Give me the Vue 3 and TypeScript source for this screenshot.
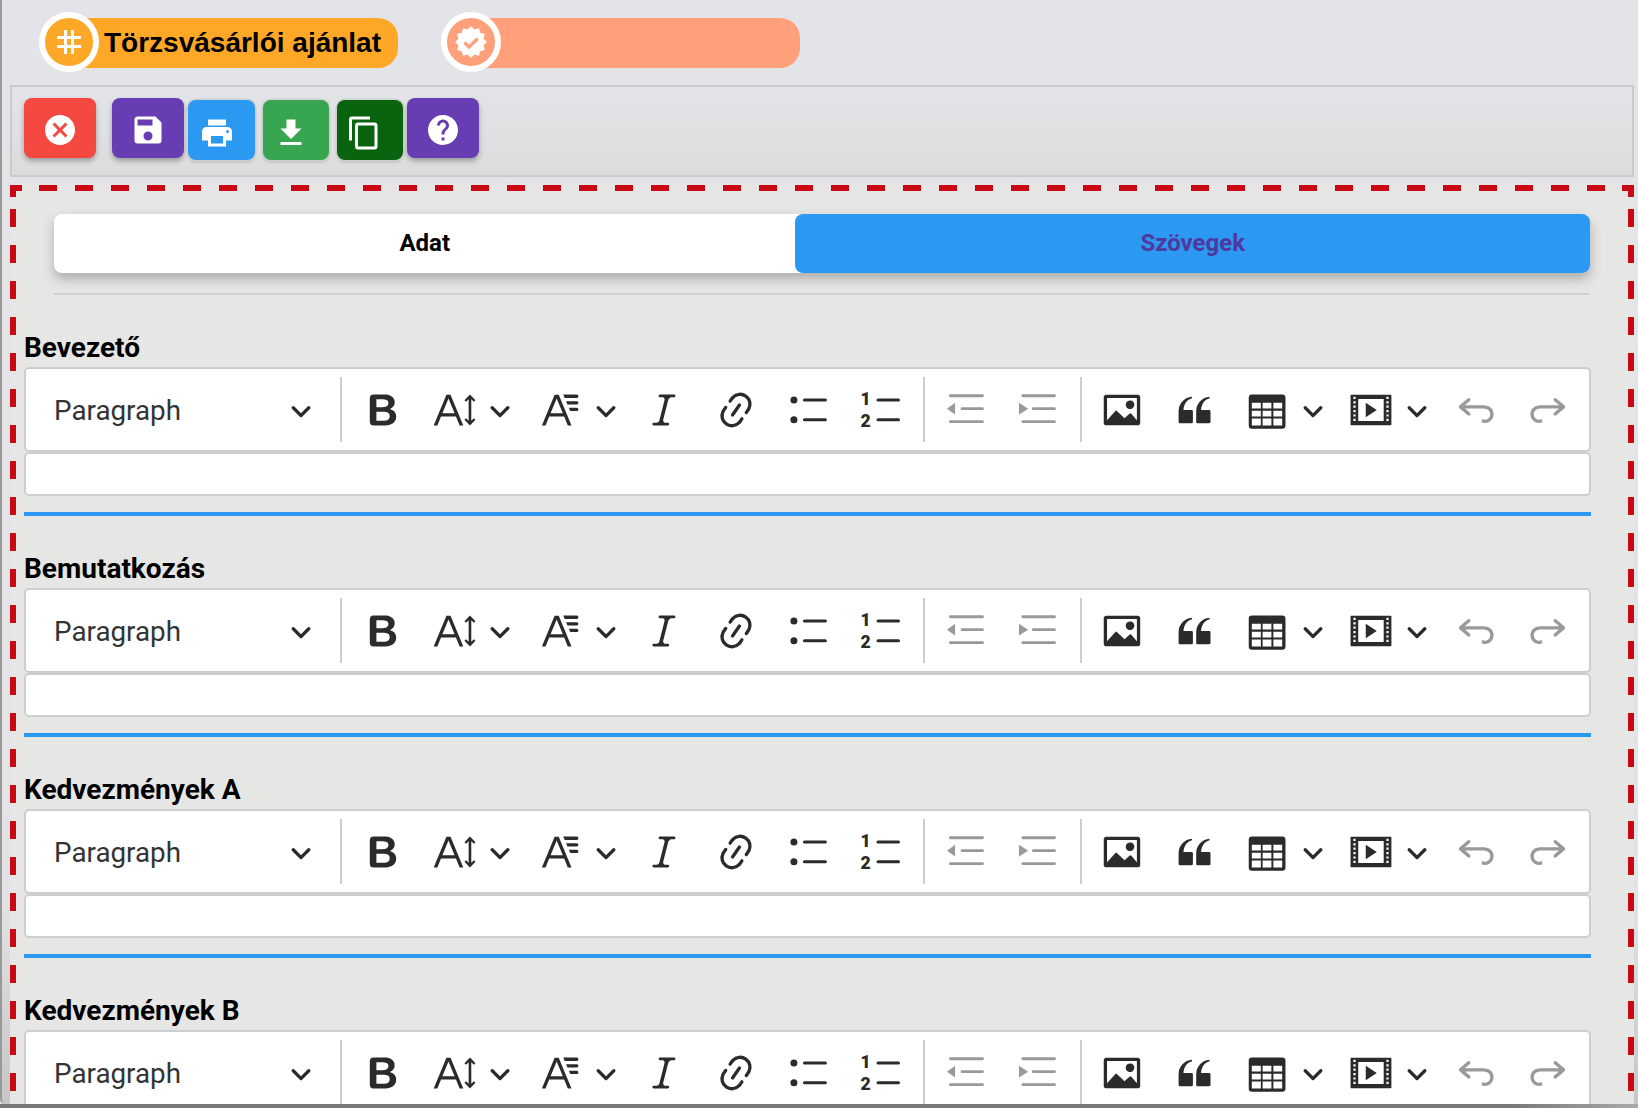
<template>
  <div class="page">
    <div class="frame">
      <div class="badges">
        <div class="badge">
          <span class="badge-circle orange">
            <svg viewBox="0 0 24 24" width="24" height="24"><path fill="#fff" fill-rule="evenodd" d="M7 0h3v6h4V0h3v6h7v3h-7v6h7v3h-7v6h-3v-6h-4v6H7v-6H0v-3h7V9H0V6h7zM10 9v6h4V9z" /></svg>
          </span>
          <span class="badge-pill orange">Törzsvásárlói ajánlat</span>
        </div>
        <div class="badge">
          <span class="badge-circle salmon">
            <svg viewBox="0 0 32 32" width="32" height="32">
              <polygon fill="#fff" :points="sealPoints" />
              <path fill="none" stroke="#ffa07a" stroke-width="3.2" d="M9.5 16.5l4.6 4.6 8.6-8.6" />
            </svg>
          </span>
          <span class="badge-pill salmon"></span>
        </div>
      </div>

      <div class="action-panel">
        <button v-for="btn in actionButtons" :key="btn.name" type="button" class="action-btn" :class="btn.name">
          <svg viewBox="0 0 24 24" width="36" height="36"><path fill="#fff" :d="btn.path" /></svg>
        </button>
      </div>

      <div class="dashed-box">
        <div class="tabs">
          <div class="tab">Adat</div>
          <div class="tab active">Szövegek</div>
        </div>
        <div class="tabs-line"></div>

        <section v-for="title in sections" :key="title" class="field">
          <div class="field-label">{{ title }}</div>
          <div class="ck-toolbar">
            <div class="ck-heading">
              <span>Paragraph</span>
              <svg class="chevron" viewBox="0 0 10 10" width="22" height="22"><path :d="chevron" /></svg>
            </div>
            <template v-for="(item, i) in toolbar" :key="i">
              <span v-if="item.sep" class="ck-sep" :class="item.sep"></span>
              <span v-else class="ck-btn" :class="[item.width, { disabled: item.disabled }]">
                <svg viewBox="0 0 20 20" width="44" height="44" fill-rule="evenodd">
                  <path :d="item.d" />
                  <template v-if="item.digits">
                    <text x="3.4" y="7.9" class="digit">1</text>
                    <text x="3.4" y="17.6" class="digit">2</text>
                  </template>
                </svg>
                <svg v-if="item.width" class="chevron" viewBox="0 0 10 10" width="22" height="22"><path :d="chevron" /></svg>
              </span>
            </template>
          </div>
          <div class="ck-editor"></div>
          <div class="field-line"></div>
        </section>
      </div>
    </div>
    <div class="bottom-bar"></div>
  </div>
</template>

<script setup lang="ts">
interface ToolItem {
  sep?: string;
  d?: string;
  width?: string;
  disabled?: boolean;
  digits?: boolean;
}

const sections = ["Bevezető", "Bemutatkozás", "Kedvezmények A", "Kedvezmények B"];

// 12 pointed seal for the second badge
const sealPoints = Array.from({ length: 24 }, (_, i) => {
  const r = i % 2 === 0 ? 16 : 13;
  const a = (i * Math.PI) / 12;
  return `${(16 + r * Math.sin(a)).toFixed(2)},${(16 - r * Math.cos(a)).toFixed(2)}`;
}).join(" ");

const actionButtons = [
  { name: "close", path: "M12,2C17.53,2 22,6.47 22,12C22,17.53 17.53,22 12,22C6.47,22 2,17.53 2,12C2,6.47 6.47,2 12,2M15.59,7L12,10.59L8.41,7L7,8.41L10.59,12L7,15.59L8.41,17L12,13.41L15.59,17L17,15.59L13.41,12L17,8.41L15.59,7Z" },
  { name: "save", path: "M15,9H5V5H15M12,19A3,3 0 0,1 9,16A3,3 0 0,1 12,13A3,3 0 0,1 15,16A3,3 0 0,1 12,19M17,3H5C3.89,3 3,3.9 3,5V19A2,2 0 0,0 5,21H19A2,2 0 0,0 21,19V7L17,3Z" },
  { name: "print", path: "M18,3H6V7H18M19,12A1,1 0 0,1 18,11A1,1 0 0,1 19,10A1,1 0 0,1 20,11A1,1 0 0,1 19,12M16,19H8V14H16M19,8H5A3,3 0 0,0 2,11V17H6V21H18V17H22V11A3,3 0 0,0 19,8Z" },
  { name: "download", path: "M5,20H19V18H5M19,9H15V3H9V9H5L12,16L19,9Z" },
  { name: "copy", path: "M19,21H8V7H19M19,5H8A2,2 0 0,0 6,7V21A2,2 0 0,0 8,23H19A2,2 0 0,0 21,21V7A2,2 0 0,0 19,5M16,1H4A2,2 0 0,0 2,3V17H4V3H16V1Z" },
  { name: "help", path: "M15.07,11.25L14.17,12.17C13.45,12.89 13,13.5 13,15H11V14.5C11,13.39 11.45,12.39 12.17,11.67L13.41,10.41C13.78,10.05 14,9.55 14,9C14,7.89 13.1,7 12,7A2,2 0 0,0 10,9H8A4,4 0 0,1 12,5A4,4 0 0,1 16,9C16,9.88 15.64,10.67 15.07,11.25M13,19H11V17H13M12,2A10,10 0 0,0 2,12C2,17.53 6.47,22 12,22A10,10 0 0,0 22,12C22,6.47 17.5,2 12,2Z" }
];

const chevron = "M.941 4.523a.75.75 0 1 1 1.06-1.06l3.006 3.005 3.005-3.005a.75.75 0 1 1 1.06 1.06l-3.549 3.55a.75.75 0 0 1-1.06 0L.941 4.523z";

const toolbar: ToolItem[] = [
  { sep: "first" },
  { d: "M10.187 17H5.773c-.637 0-1.092-.138-1.364-.415-.273-.277-.409-.718-.409-1.323V4.738c0-.617.14-1.062.419-1.332.279-.27.73-.406 1.354-.406h4.68c.69 0 1.288.041 1.793.124.506.083.96.242 1.36.478.341.197.644.447.906.75a3.262 3.262 0 0 1 .808 2.162c0 1.401-.722 2.426-2.167 3.075C15.05 10.175 16 11.315 16 13.01a3.756 3.756 0 0 1-2.296 3.504 6.1 6.1 0 0 1-1.517.377c-.571.073-1.238.11-2 .11zm-.217-6.217H7v4.087h3.069c1.977 0 2.965-.69 2.965-2.072 0-.707-.256-1.22-.768-1.537-.512-.319-1.277-.478-2.296-.478zM7 5.13v3.619h2.606c.729 0 1.292-.067 1.69-.2a1.6 1.6 0 0 0 .91-.765c.165-.267.247-.566.247-.897 0-.707-.26-1.176-.778-1.409-.519-.232-1.31-.348-2.375-.348H7z" },
  { width: "w106", d: "M9.816 11.5 7.038 4.785 4.261 11.5h5.555zm.62 1.5H3.641l-1.666 4.028H.312l5.789-14h1.875l5.789 14h-1.663L10.436 13zM16.8 3l2.5 2.6-.7.7-1.2-1.2v9.8l1.2-1.2.7.7-2.5 2.6-2.5-2.6.7-.7 1.2 1.2V5.1L15 6.3l-.7-.7z" },
  { width: "w103", d: "M11.03 3h6.149a.75.75 0 1 1 0 1.5h-5.514L11.03 3zm1.27 3h4.879a.75.75 0 1 1 0 1.5h-4.244L12.3 6zm1.27 3h3.609a.75.75 0 1 1 0 1.5h-2.973L13.57 9zm-2.754 2.5L8.038 4.785 5.261 11.5h5.555zm.62 1.5H4.641l-1.666 4.028H1.312l5.789-14h1.875l5.789 14h-1.663L11.436 13z" },
  { d: "m9.586 14.633.021.004c-.036.335.095.655.393.962.082.083.173.15.274.201h1.474a.6.6 0 1 1 0 1.2H5.304a.6.6 0 0 1 0-1.2h1.15c.474-.07.809-.182 1.005-.334.157-.122.291-.32.404-.597l2.416-9.55a1.053 1.053 0 0 0-.281-.823 1.12 1.12 0 0 0-.442-.296H8.15a.6.6 0 0 1 0-1.2h6.443a.6.6 0 1 1 0 1.2h-1.195c-.376.056-.65.155-.823.296-.215.175-.423.439-.623.79l-2.366 9.347z" },
  { d: "m11.077 15 .991-1.416a.75.75 0 1 1 1.229.86l-1.148 1.64a.748.748 0 0 1-.217.206 5.251 5.251 0 0 1-8.503-5.955.741.741 0 0 1 .12-.274l1.147-1.639a.75.75 0 1 1 1.228.86L4.933 10.7l.006.003a3.75 3.75 0 0 0 6.132 4.294l.006.004zm5.494-5.335a.748.748 0 0 1-.12.274l-1.147 1.639a.75.75 0 1 1-1.228-.86l.86-1.23a3.75 3.75 0 0 0-6.144-4.301l-.86 1.229a.75.75 0 0 1-1.229-.86l1.148-1.64a.748.748 0 0 1 .217-.206 5.251 5.251 0 0 1 8.503 5.955zm-4.563-2.532a.75.75 0 0 1 .184 1.045l-3.155 4.505a.75.75 0 1 1-1.229-.86l3.155-4.506a.75.75 0 0 1 1.045-.184z" },
  { d: "M8.4 4.75h9.5a.7.7 0 0 1 0 1.4H8.4a.7.7 0 0 1 0-1.4zm0 8.95h9.5a.7.7 0 0 1 0 1.4H8.4a.7.7 0 0 1 0-1.4zM3.6 3.85a1.6 1.6 0 1 1 0 3.2 1.6 1.6 0 0 1 0-3.2zm0 8.95a1.6 1.6 0 1 1 0 3.2 1.6 1.6 0 0 1 0-3.2z" },
  { digits: true, d: "M9.1 4.75h9.3a.7.7 0 0 1 0 1.4H9.1a.7.7 0 0 1 0-1.4zm0 8.95h9.3a.7.7 0 0 1 0 1.4H9.1a.7.7 0 0 1 0-1.4z" },
  { sep: "mid" },
  { disabled: true, d: "M3.35 2.85h14.6a.65.65 0 0 1 0 1.3H3.35a.65.65 0 0 1 0-1.3zM8.65 8.75h9.3a.65.65 0 0 1 0 1.3h-9.3a.65.65 0 0 1 0-1.3zM3.35 14.65h14.6a.65.65 0 0 1 0 1.3H3.35a.65.65 0 0 1 0-1.3zM5.5 6.7v5.4L1.8 9.4z" },
  { disabled: true, d: "M3.55 2.85h14.4a.65.65 0 0 1 0 1.3H3.55a.65.65 0 0 1 0-1.3zM8.35 8.75h9.6a.65.65 0 0 1 0 1.3h-9.6a.65.65 0 0 1 0-1.3zM3.55 14.65h14.4a.65.65 0 0 1 0 1.3H3.55a.65.65 0 0 1 0-1.3zM1.8 6.7v5.4L6 9.4z" },
  { sep: "mid" },
  { d: "M6.91 10.54c.26-.23.64-.21.88.03l3.36 3.14 2.23-2.06a.64.64 0 0 1 .87 0l2.52 2.97V4.5H3.2v10.12l3.71-4.08zm10.27-7.51c.6 0 1.09.47 1.09 1.05v11.84c0 .59-.49 1.06-1.09 1.06H2.79c-.6 0-1.09-.47-1.09-1.06V4.08c0-.58.49-1.05 1.1-1.05h14.38zm-5.22 5.56a1.96 1.96 0 1 1 3.4-1.96 1.96 1.96 0 0 1-3.4 1.96z" },
  { d: "M3 10.423a6.5 6.5 0 0 1 6.056-6.408l.038.67C6.448 5.423 5.354 7.663 5.22 10H9c.552 0 .5.432.5.986v4.511c0 .554-.448.503-1 .503h-5c-.552 0-.5-.449-.5-1.003v-4.574zm8 0a6.5 6.5 0 0 1 6.056-6.408l.038.67c-2.646.739-3.74 2.979-3.873 5.315H17c.552 0 .5.432.5.986v4.511c0 .554-.448.503-1 .503h-5c-.552 0-.5-.449-.5-1.003v-4.574z" },
  { width: "w105a", d: "M3.2 2.9h13.7a1.5 1.5 0 0 1 1.5 1.5V17a1.5 1.5 0 0 1-1.5 1.5H3.2A1.5 1.5 0 0 1 1.7 17V4.4a1.5 1.5 0 0 1 1.5-1.5zM3.1 6.7v2.6h4.1V6.7zM8 6.7v2.6h4V6.7zM12.9 6.7v2.6h4V6.7zM3.1 10.3v2.6h4.1v-2.6zM8 10.3v2.6h4v-2.6zM12.9 10.3v2.6h4v-2.6zM3.1 13.9v3.1h4.1v-3.1zM8 13.9v3.1h4v-3.1zM12.9 13.9v3.1h4v-3.1z" },
  { width: "w105b", d: "M18.68 3.03c.6 0 .59-.03.59.55v12.84c0 .59.01.56-.59.56H1.29c-.6 0-.59.03-.59-.56V3.58c0-.58-.01-.55.6-.55h17.38zM15.77 15V5H4.2v10h11.57zM2 4v1h1V4H2zm0 2v1h1V6H2zm0 2v1h1V8H2zm0 2v1h1v-1H2zm0 2v1h1v-1H2zm0 2v1h1v-1H2zm15-10v1h1V4h-1zm0 2v1h1V6h-1zm0 2v1h1V8h-1zm0 2v1h1v-1h-1zm0 2v1h1v-1h-1zm0 2v1h1v-1h-1zM7.62 6.75l5 3.25-5 3.25V6.75z" },
  { disabled: true, d: "m5.042 9.367 2.189 1.837a.75.75 0 0 1-.965 1.149l-3.788-3.18a.747.747 0 0 1-.21-.284.75.75 0 0 1 .17-.945L6.23 4.762a.75.75 0 1 1 .964 1.15L4.863 7.866h8.917A.75.75 0 0 1 14 7.9a4 4 0 1 1-1.477 7.718l.344-1.489a2.5 2.5 0 1 0 1.094-4.73l.008-.032H5.042z" },
  { disabled: true, d: "m14.958 9.367-2.189 1.837a.75.75 0 0 0 .965 1.149l3.788-3.18a.747.747 0 0 0 .21-.284.75.75 0 0 0-.17-.945L13.77 4.762a.75.75 0 1 0-.964 1.15l2.331 1.955H6.22A.75.75 0 0 0 6 7.9a4 4 0 1 0 1.477 7.718l-.344-1.489A2.5 2.5 0 1 1 6.039 9.4l-.008-.032h8.927z" }
];
</script>

<style>
html,
body {
  margin: 0;
  overflow: hidden;
}
</style>

<style scoped>
.page {
  width: 1638px;
  height: 1108px;
  overflow: hidden;
  background: #e3e4e8;
  font-family: Roboto, sans-serif;
}

.frame {
  box-sizing: border-box;
  height: 1104px;
  overflow: hidden;
  border-left: 2px solid #999;
  border-bottom-left-radius: 5px;
  padding: 12px 4px 0 8px;
  background: linear-gradient(to bottom, #e3e4e8 0, #e2e3e6 900px, #c6c6c6 1104px);
}

.bottom-bar {
  height: 4px;
  background: linear-gradient(to right, #777 92%, #aaa 100%);
}

/* top badges */
.badges {
  display: flex;
  gap: 43px;
  padding-left: 29px;
}

.badge {
  display: flex;
  height: 60px;
}

.badge-circle {
  box-sizing: border-box;
  width: 60px;
  height: 60px;
  border: 6px solid #fff;
  border-radius: 50%;
  display: flex;
  align-items: center;
  justify-content: center;
  z-index: 1;
}

.badge-pill {
  box-sizing: border-box;
  width: 340px;
  height: 50px;
  margin: 6px 0 0 -41px;
  padding-left: 46px;
  border-radius: 0 20px 20px 0;
  font-family: "Liberation Sans", Arial, sans-serif;
  font-weight: 700;
  font-size: 28px;
  line-height: 50px;
  color: #000;
  white-space: nowrap;
}

.orange {
  background: #ffa726;
}

.salmon {
  background: #ffa07a;
}

/* action buttons */
.action-panel {
  box-sizing: border-box;
  height: 92px;
  margin-top: 13px;
  padding: 11px 12px;
  border: 2px solid #cbcbcb;
  background: linear-gradient(to bottom, #e3e4e8, #dcdcdc);
  display: flex;
  align-items: flex-start;
}

.action-btn {
  box-sizing: border-box;
  width: 72px;
  height: 60px;
  padding: 4px 0 0;
  border: 0;
  border-radius: 8px;
  display: flex;
  align-items: center;
  justify-content: center;
  box-shadow: 0 3px 5px rgba(0, 0, 0, 0.3);
}

.action-btn.close {
  background: #f54840;
  margin-right: 16px;
}

.action-btn.save {
  background: #673db3;
  margin-right: 4px;
}

.action-btn.help {
  background: #673db3;
  margin-left: 4.5px;
  padding-right: 1px;
}

.action-btn.print,
.action-btn.download,
.action-btn.copy {
  margin-top: 2px;
  box-shadow: 0 0 0 1.5px #cfcfcf, 0 2px 3px rgba(0, 0, 0, 0.2);
}

.action-btn.print {
  width: 67px;
  padding: 6px 9px 0 0;
  background: #2b99f1;
  margin-right: 7.5px;
}

.action-btn.download {
  width: 66px;
  padding: 5px 10px 0 0;
  background: #38a650;
  margin-right: 8px;
}

.action-btn.copy {
  width: 66px;
  padding: 5px 11px 0 0;
  background: #0a630f;
}

/* dashed area */
.dashed-box {
  box-sizing: border-box;
  height: 1000px;
  margin-top: 8px;
  padding: 29px 43px 0 14px;
  background-color: #e6e6e4;
  background-image:
    linear-gradient(#c90813, #c90813),
    linear-gradient(#c90813, #c90813),
    linear-gradient(#c90813, #c90813),
    linear-gradient(#c90813, #c90813),
    linear-gradient(to right, #c90813 50%, transparent 50%),
    linear-gradient(to bottom, #c90813 50%, transparent 50%),
    linear-gradient(to bottom, #c90813 50%, transparent 50%);
  background-size:
    6px 12px,
    6px 12px,
    12px 6px,
    12px 6px,
    36px 6px,
    6px 36px,
    6px 36px;
  background-position:
    left top,
    right top,
    left top,
    right top,
    29px 0,
    left 0 top 24px,
    right 0 top 24px;
  background-repeat: no-repeat, no-repeat, no-repeat, no-repeat, repeat-x, repeat-y, repeat-y;
}

.tabs {
  display: grid;
  grid-template-columns: 741fr 794fr;
  height: 59px;
  margin: 0 1px 0 30px;
  border-radius: 8px;
  background: #fff;
  box-shadow: 0 6px 12px rgba(0, 0, 0, 0.25);
}

.tab {
  display: flex;
  align-items: center;
  justify-content: center;
  font-weight: 700;
  font-size: 24px;
  color: #000;
  padding-bottom: 1px;
}

.tab.active {
  background: #2b99f1;
  color: #4f38a0;
  border-radius: 8px;
}

.tabs-line {
  height: 2px;
  margin: 20px 2px 0 30px;
  background: #d0d0d0;
}

/* editors */
.field-label {
  margin: 37px 0 3px;
  font-weight: 700;
  font-size: 28px;
  line-height: 32px;
  color: #000;
}

.ck-toolbar {
  box-sizing: border-box;
  height: 85px;
  border: 2px solid #ccced1;
  border-radius: 5px;
  background: #fff;
  display: flex;
  align-items: center;
}

.ck-heading {
  box-sizing: border-box;
  width: 308px;
  padding: 0 0 0 28px;
  display: flex;
  align-items: center;
  justify-content: space-between;
  font-size: 27.8px;
  color: #333;
}

.ck-heading span {
  padding-top: 2px;
}

.ck-heading .chevron {
  margin-right: 22px;
}

.ck-sep {
  width: 2px;
  height: 65px;
  background: #ccced1;
}

.ck-sep.first {
  margin: 0 4.5px 0 6px;
}

.ck-sep.mid {
  margin: 0 4px 0 7px;
}

.ck-btn {
  box-sizing: border-box;
  width: 72px;
  padding: 0 14px;
  display: flex;
  align-items: center;
}

.ck-btn.w106 {
  width: 106px;
}

.ck-btn.w103 {
  width: 103px;
}

.ck-btn.w105a {
  width: 105px;
  padding-left: 15px;
}

.ck-btn.w105b {
  width: 105px;
}

.ck-btn .chevron {
  margin-left: 12.5px;
}

.ck-btn.w105a .chevron {
  margin-left: 13px;
}

.ck-btn.w105b .chevron {
  margin-left: 13.5px;
}

.ck-heading svg,
.ck-btn svg {
  flex: none;
  fill: #2b2b2b;
}

.ck-btn.disabled svg {
  fill: #999;
}

.digit {
  font-family: Roboto, sans-serif;
  font-weight: 900;
  font-size: 8px;
  text-anchor: middle;
}

.ck-editor {
  box-sizing: border-box;
  height: 44px;
  border: 2px solid #ccced1;
  border-radius: 5px;
  background: #fff;
}

.field-line {
  height: 4px;
  margin-top: 16px;
  background: #2b99f1;
}
</style>
